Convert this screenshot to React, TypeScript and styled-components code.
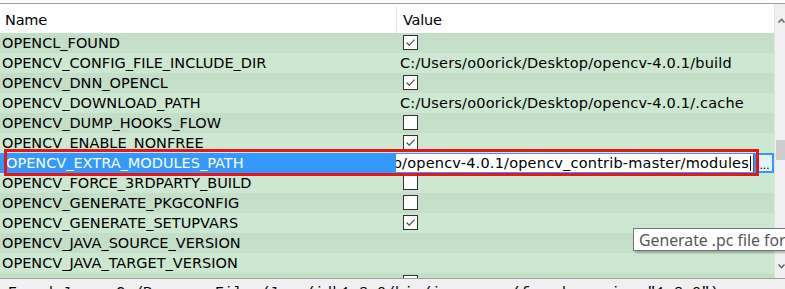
import React from "react";
import styled, { createGlobalStyle } from "styled-components";

const GlobalStyle = createGlobalStyle`
  html, body { margin: 0; padding: 0; background: #ffffff; overflow: hidden; }
  #root { width: 785px; height: 289px; }
`;

const Frame = styled.div`
  position: relative;
  width: 785px;
  height: 289px;
  display: flex;
  flex-direction: column;
  overflow: hidden;
  background: #ffffff;
  font-family: "DejaVu Sans", "Liberation Sans", sans-serif;
  font-size: 14.5px;
  color: #000;
`;

const TopGap = styled.div`
  height: 3px;
  flex: none;
  background: #ffffff;
`;

const TreeArea = styled.div`
  flex: none;
  height: 274px;
  display: flex;
  border-top: 1px solid #a0a0a0;
`;

const Table = styled.div`
  flex: 1;
  min-width: 0;
  display: flex;
  flex-direction: column;
  overflow: hidden;
`;

const Header = styled.div`
  height: 29px;
  flex: none;
  display: grid;
  grid-template-columns: 396px minmax(0, 1fr);
  background: #ffffff;
`;

const HeadCell = styled.div<{ $divider?: boolean }>`
  display: flex;
  align-items: center;
  padding-left: ${(p) => (p.$divider ? "6px" : "5px")};
  border-left: ${(p) => (p.$divider ? "1px solid #e5e5e5" : "none")};
  margin-top: 2px;
  letter-spacing: -0.2px;
`;

const Body = styled.div`
  flex: 1;
  display: flex;
  flex-direction: column;
  overflow: hidden;
`;

const Row = styled.div<{ $dark: boolean; $selected?: boolean }>`
  height: 20px;
  flex: none;
  display: grid;
  grid-template-columns: 396px minmax(0, 1fr);
  background: ${(p) => (p.$selected ? "#3399ff" : p.$dark ? "#c4dfc8" : "#cce8d0")};
  color: ${(p) => (p.$selected ? "#ffffff" : "#000000")};
`;

const NameCell = styled.div<{ $indent?: number }>`
  display: flex;
  align-items: center;
  padding-left: ${(p) => p.$indent ?? 2}px;
  white-space: nowrap;
  overflow: hidden;
`;

const ValueCell = styled.div<{ $editing?: boolean }>`
  display: flex;
  align-items: center;
  min-width: 0;
  padding-left: ${(p) => (p.$editing ? "0" : "4px")};
  white-space: nowrap;
  overflow: hidden;
  letter-spacing: 0.2px;
`;

const CheckBox = styled.span`
  width: 13px;
  height: 13px;
  margin-left: 3px;
  margin-top: -1px;
  border: 1px solid #333333;
  background: #ffffff;
  display: flex;
  align-items: center;
  justify-content: center;
  box-sizing: content-box;
`;

const EditorRow = styled.div`
  flex: 1;
  min-width: 0;
  display: flex;
  align-items: center;
  height: 20px;
  padding-right: 1px;
  gap: 2px;
`;

const Editor = styled.div`
  flex: 1;
  min-width: 0;
  height: 18px;
  display: flex;
  align-items: center;
  background: #ffffff;
  border-right: 1px solid #5a5a5a;
  overflow: hidden;
`;

const EditText = styled.div`
  flex: 1;
  min-width: 0;
  display: flex;
  justify-content: flex-end;
  overflow: hidden;
  white-space: nowrap;
  color: #000;
  padding-right: 1px;
`;

const EditValue = styled.span`
  flex: none;
`;

const Caret = styled.span`
  width: 1px;
  height: 15px;
  background: #000;
  flex: none;
  margin-right: 2px;
`;

const DotsButton = styled.div`
  width: 15px;
  height: 16px;
  flex: none;
  background: #e5f1fb;
  border: 1px solid #3399ff;
  color: #000;
  font-size: 12px;
  display: flex;
  align-items: flex-end;
  justify-content: center;
  line-height: 12px;
  font-family: "Liberation Sans", sans-serif;
  letter-spacing: 0px;
`;

const Scrollbar = styled.div`
  width: 10px;
  flex: none;
  background: #f0f0f0;
  border-left: 1px solid #e2e2e2;
  display: flex;
  flex-direction: column;
  align-items: flex-end;
`;

const Arrow = styled.div<{ $down?: boolean }>`
  height: 16px;
  width: 9px;
  display: flex;
  align-items: center;
  justify-content: flex-end;
  margin-top: ${(p) => (p.$down ? "auto" : "8px")};
  margin-bottom: ${(p) => (p.$down ? "4px" : "0")};
`;

const Thumb = styled.div`
  width: 9px;
  height: 20px;
  background: #cdcdcd;
  margin-top: 112px;
`;

const Bottom = styled.div`
  flex: 1;
  border-top: 1px solid #a0a0a0;
  background: #f0f0f0;
  overflow: hidden;
`;

const Console = styled.div`
  font-family: "Liberation Mono", monospace;
  font-size: 15px;
  line-height: 18px;
  white-space: pre;
  color: #000;
  margin-top: 6px;
  padding-left: 8px;
`;

const RedMark = styled.div`
  position: absolute;
  left: 4px;
  top: 149px;
  width: 755px;
  height: 27px;
  border: 3px solid #e8151b;
  box-sizing: border-box;
  pointer-events: none;
`;

const Tooltip = styled.div`
  position: absolute;
  left: 633px;
  top: 228px;
  height: 21px;
  padding: 0 6px 0 5px;
  display: flex;
  align-items: center;
  background: #ffffff;
  border: 1px solid #767676;
  box-shadow: 2px 2px 2px rgba(0, 0, 0, 0.25);
  color: #575757;
  font-family: "Noto Sans", "Open Sans", sans-serif;
  font-size: 15.8px;
  white-space: nowrap;
`;

type Entry = { name: string; value?: string; check?: boolean };

const entries: Entry[] = [
  { name: "OPENCL_FOUND", check: true },
  { name: "OPENCV_CONFIG_FILE_INCLUDE_DIR", value: "C:/Users/o0orick/Desktop/opencv-4.0.1/build" },
  { name: "OPENCV_DNN_OPENCL", check: true },
  { name: "OPENCV_DOWNLOAD_PATH", value: "C:/Users/o0orick/Desktop/opencv-4.0.1/.cache" },
  { name: "OPENCV_DUMP_HOOKS_FLOW", check: false },
  { name: "OPENCV_ENABLE_NONFREE", check: true },
  { name: "OPENCV_EXTRA_MODULES_PATH" },
  { name: "OPENCV_FORCE_3RDPARTY_BUILD", check: false },
  { name: "OPENCV_GENERATE_PKGCONFIG", check: false },
  { name: "OPENCV_GENERATE_SETUPVARS", check: true },
  { name: "OPENCV_JAVA_SOURCE_VERSION", value: "" },
  { name: "OPENCV_JAVA_TARGET_VERSION", value: "" },
  { name: "OPENCV_MATHJAX_RELPATH", check: false },
];

const Check = ({ on }: { on: boolean }) => (
  <CheckBox>
    {on && (
      <svg width="11" height="11" viewBox="0 0 11 11">
        <path d="M1.5 5.5 L4.2 8.2 L9.6 2.6" fill="none" stroke="#4d4d4d" strokeWidth="1.2" />
      </svg>
    )}
  </CheckBox>
);

export default function App() {
  return (
    <>
      <GlobalStyle />
      <Frame>
        <TopGap />
        <TreeArea>
          <Table>
            <Header>
              <HeadCell>Name</HeadCell>
              <HeadCell $divider>Value</HeadCell>
            </Header>
            <Body>
              {entries.map((e, i) => {
                const selected = e.name === "OPENCV_EXTRA_MODULES_PATH";
                return (
                  <Row key={e.name} $dark={i % 2 === 0} $selected={selected}>
                    <NameCell $indent={selected ? 6 : 2}>{e.name}</NameCell>
                    <ValueCell $editing={selected}>
                      {selected ? (
                        <EditorRow>
                          <Editor>
                            <EditText>
                              <EditValue>C:/Users/o0orick/Desktop/opencv-4.0.1/opencv_contrib-master/modules</EditValue>
                            </EditText>
                            <Caret />
                          </Editor>
                          <DotsButton>...</DotsButton>
                        </EditorRow>
                      ) : e.check !== undefined ? (
                        <Check on={e.check} />
                      ) : (
                        e.value
                      )}
                    </ValueCell>
                  </Row>
                );
              })}
            </Body>
          </Table>
          <Scrollbar>
            <Arrow>
              <svg width="7" height="5" viewBox="0 0 7 5">
                <path d="M0.5 4.5 L3.5 1.2 L6.5 4.5" fill="none" stroke="#606060" strokeWidth="1.4" />
              </svg>
            </Arrow>
            <Thumb />
            <Arrow $down>
              <svg width="7" height="5" viewBox="0 0 7 5">
                <path d="M0.5 0.5 L3.5 3.8 L6.5 0.5" fill="none" stroke="#606060" strokeWidth="1.4" />
              </svg>
            </Arrow>
          </Scrollbar>
        </TreeArea>
        <Bottom>
          <Console>Found Java: C:/Program Files/Java/jdk1.8.0/bin/java.exe (found version "1.8.0")</Console>
        </Bottom>
        <RedMark />
        <Tooltip>Generate .pc file for pkg-config build tool (deprecated)</Tooltip>
      </Frame>
    </>
  );
}
